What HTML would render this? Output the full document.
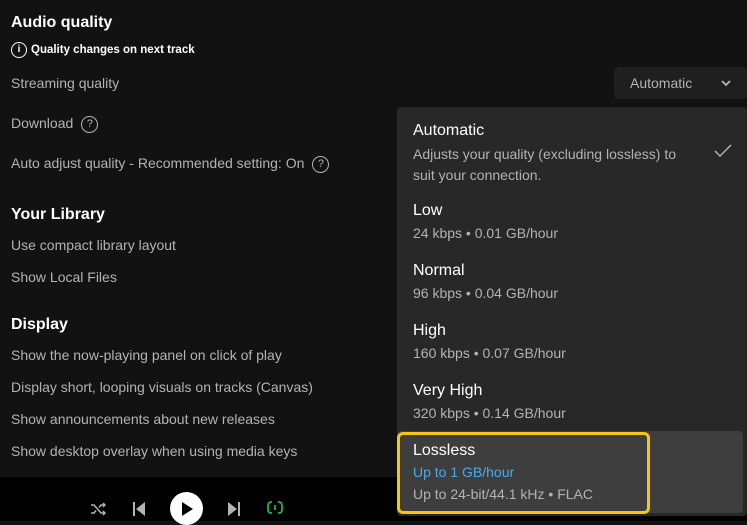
<!DOCTYPE html>
<html><head><meta charset="utf-8"><style>
*{margin:0;padding:0;box-sizing:border-box}
body{width:747px;height:521px;overflow:hidden;background:#121212;font-family:"Liberation Sans",sans-serif;position:relative;color:#b3b3b3}
.a{position:absolute;white-space:nowrap}
.h{color:#fff;font-weight:bold;font-size:16px}
.l{font-size:14px;color:#b3b3b3}
.q{display:inline-block;width:17px;height:17px;border:1.5px solid #b3b3b3;border-radius:50%;font-size:11px;text-align:center;line-height:14px;color:#b3b3b3;vertical-align:middle;margin-left:8px}
.bar{position:absolute;left:0;top:477px;width:747px;height:44px;background:#000}
.panel{position:absolute;left:397px;top:107px;width:350px;height:409px;background:#282828;border-radius:4px}
.t{color:#fff;font-size:16px}
.s{font-size:14px;color:#b3b3b3}
</style></head><body>
<div class="a h" style="left:11px;top:14px">Audio quality</div>
<div class="a" style="left:11px;top:42px;color:#fff;font-size:11.5px;font-weight:bold"><span style="display:inline-block;width:16px;height:16px;border:1.5px solid #fff;border-radius:50%;text-align:center;line-height:13px;font-size:10px;vertical-align:middle;margin-right:4px">i</span>Quality changes on next track</div>
<div class="a l" style="left:11px;top:75px">Streaming quality</div>
<div class="a l" style="left:11px;top:115px">Download<span class="q">?</span></div>
<div class="a l" style="left:11px;top:155px">Auto adjust quality - Recommended setting: On<span class="q">?</span></div>
<div class="a h" style="left:11px;top:206px">Your Library</div>
<div class="a l" style="left:11px;top:237px">Use compact library layout</div>
<div class="a l" style="left:11px;top:269px">Show Local Files</div>
<div class="a h" style="left:11px;top:316px">Display</div>
<div class="a l" style="left:11px;top:347px">Show the now-playing panel on click of play</div>
<div class="a l" style="left:11px;top:379px">Display short, looping visuals on tracks (Canvas)</div>
<div class="a l" style="left:11px;top:411px">Show announcements about new releases</div>
<div class="a l" style="left:11px;top:443px">Show desktop overlay when using media keys</div>

<div class="a" style="left:614px;top:67px;width:133px;height:32px;background:#1f1f1f;border-radius:4px;color:#b3b3b3;font-size:14px;padding:8px 0 0 16px">Automatic<svg style="position:absolute;left:107px;top:12px" width="10" height="8" viewBox="0 0 10 8"><path d="M1 2l4 4 4-4" stroke="#b3b3b3" stroke-width="1.8" fill="none"/></svg></div>

<div class="bar">
<svg class="a" style="left:90px;top:24px" width="16" height="16" viewBox="0 0 16 16" fill="none" stroke="#b3b3b3" stroke-width="1.5"><path d="M1 4h3l7 8h4M1 12h3l2-2.5M9 6.5L11 4h4M13 2l2 2-2 2M13 10l2 2-2 2"/></svg>
<svg class="a" style="left:132px;top:24px" width="14" height="16" viewBox="0 0 14 16"><rect x="1" y="1" width="2" height="14" fill="#b3b3b3"/><path d="M13 1v14L4 8z" fill="#b3b3b3"/></svg>
<div class="a" style="left:170px;top:15px;width:33px;height:33px;border-radius:50%;background:#fff"></div>
<svg class="a" style="left:180px;top:24px" width="14" height="16" viewBox="0 0 14 16"><path d="M2 1v14l11-7z" fill="#000"/></svg>
<svg class="a" style="left:227px;top:24px" width="14" height="16" viewBox="0 0 14 16"><rect x="11" y="1" width="2" height="14" fill="#b3b3b3"/><path d="M1 1v14l9-7z" fill="#b3b3b3"/></svg>
<svg class="a" style="left:267px;top:22px" width="16" height="18" viewBox="0 0 16 18" fill="none" stroke="#1ed760" stroke-width="1.5"><path d="M5 3H4a3 3 0 0 0-3 3v5a3 3 0 0 0 3 3h1M11 14h1a3 3 0 0 0 3-3V6a3 3 0 0 0-3-3h-1M8 6v5"/></svg>
</div>

<div class="panel">
<div class="a t" style="left:16px;top:15px">Automatic</div>
<div class="a s" style="left:16px;top:37px;line-height:21px">Adjusts your quality (excluding lossless) to<br>suit your connection.</div>
<svg class="a" style="left:317px;top:37px" width="18" height="14" viewBox="0 0 18 14"><path d="M1 7l5 5L17 1" stroke="#b3b3b3" stroke-width="1.5" fill="none"/></svg>
<div class="a t" style="left:16px;top:95px">Low</div>
<div class="a s" style="left:16px;top:118px">24 kbps • 0.01 GB/hour</div>
<div class="a t" style="left:16px;top:155px">Normal</div>
<div class="a s" style="left:16px;top:178px">96 kbps • 0.04 GB/hour</div>
<div class="a t" style="left:16px;top:215px">High</div>
<div class="a s" style="left:16px;top:238px">160 kbps • 0.07 GB/hour</div>
<div class="a t" style="left:16px;top:275px">Very High</div>
<div class="a s" style="left:16px;top:298px">320 kbps • 0.14 GB/hour</div>
<div class="a" style="left:0;top:324px;width:346px;height:82px;background:#3e3e3e;border-radius:4px"></div>
<div class="a" style="left:0;top:325px;width:253px;height:82px;border:3px solid #f5c518;border-radius:6px"></div>
<div class="a t" style="left:16px;top:335px">Lossless</div>
<div class="a s" style="left:16px;top:357px;color:#4ea8e8">Up to 1 GB/hour</div>
<div class="a s" style="left:16px;top:379px">Up to 24-bit/44.1 kHz • FLAC</div>
</div>
</body></html>
